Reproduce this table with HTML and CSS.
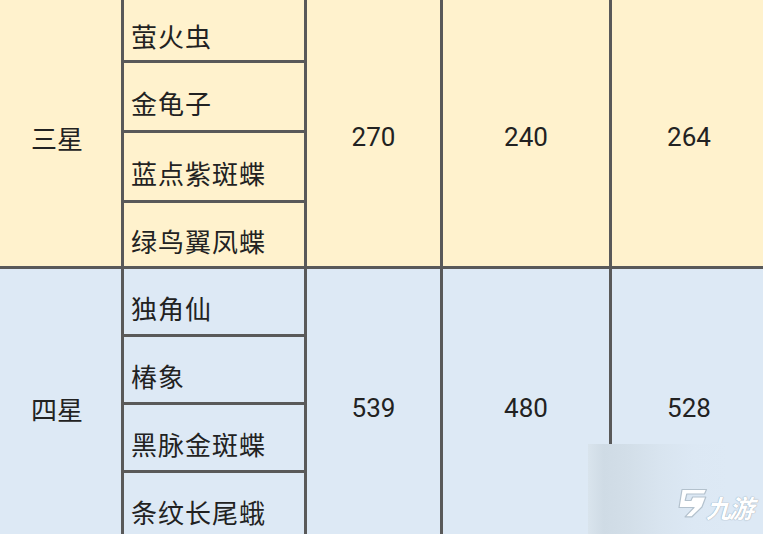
FILE: index.html
```html
<!DOCTYPE html>
<html lang="zh">
<head>
<meta charset="utf-8">
<link rel="stylesheet" href="styles.css">
</head>
<body>
<div class="page">
  <div class="grid">
    <div class="cell star yellow r-up">三星</div>
    <div class="cell name yellow h1">萤火虫</div>
    <div class="cell num yellow r-up">270</div>
    <div class="cell num yellow r-up">240</div>
    <div class="cell num yellow r-up">264</div>
    <div class="cell name yellow h2">金龟子</div>
    <div class="cell name yellow h3">蓝点紫斑蝶</div>
    <div class="cell name yellow h4">绿鸟翼凤蝶</div>

    <div class="cell star blue r-down">四星</div>
    <div class="cell name blue h5">独角仙</div>
    <div class="cell num blue r-down">539</div>
    <div class="cell num blue r-down">480</div>
    <div class="cell num blue r-down">528</div>
    <div class="cell name blue h6">椿象</div>
    <div class="cell name blue h7">黑脉金斑蝶</div>
    <div class="cell name blue h8">条纹长尾蛾</div>
  </div>

  <div class="watermark">
    <svg class="wm-logo" width="34" height="30" viewBox="0 0 34 30">
      <path d="M8 1.5 L32.5 1.5 L30.5 6 L12.8 6 L11.2 12.5 L17 12.5 L18.6 9 L31.8 9 L28 19 L18 28.8 L11 28.8 L20 19.5 L5 19.5 Z" fill="#ffffff" stroke="#b3c1cd" stroke-width="1.2" stroke-linejoin="round"/>
    </svg>
    <span class="wm-text">九游</span>
  </div>
</div>
</body>
</html>
```
FILE: styles.css
```css
html, body {
  margin: 0;
  padding: 0;
  width: 763px;
  height: 534px;
  overflow: hidden;
  background: #dde9f5;
}

.page {
  position: relative;
  width: 763px;
  height: 534px;
  overflow: hidden;
}

.grid {
  display: grid;
  grid-template-columns: 125px 180px 133px 166px 160px;
  grid-template-rows: 61px 67px 67px 63px 65px 65px 65px 65px;
  gap: 3px;
  padding: 3px;
  background: #595959;
  margin: -4px 0 0 -7px;
  width: max-content;
  font-family: Roboto, "Noto Sans CJK SC", sans-serif;
  color: #222222;
}

.cell {
  display: flex;
  align-items: center;
  box-sizing: border-box;
}

.yellow { background: #fff2cd; }
.blue { background: #dde9f5; }

.r-up { grid-row: 1 / span 4; }
.r-down { grid-row: 5 / span 4; }

.star {
  grid-column: 1;
  justify-content: center;
  font-family: "Noto Sans CJK SC", sans-serif;
  font-size: 26px;
  padding-top: 9px;
  padding-right: 3px;
}

.name {
  grid-column: 2;
  font-family: "Noto Sans CJK SC", sans-serif;
  font-size: 26px;
  letter-spacing: 1px;
  padding-left: 7px;
  padding-top: 11px;
}

.num {
  justify-content: center;
  font-size: 26px;
  padding-top: 9px;
}

.grid .num:nth-child(3), .grid .num:nth-child(11) { grid-column: 3; }
.grid .num:nth-child(4), .grid .num:nth-child(12) { grid-column: 4; }
.grid .num:nth-child(5), .grid .num:nth-child(13) { grid-column: 5; padding-right: 6px; }

.watermark {
  position: absolute;
  left: 588px;
  top: 444px;
  width: 175px;
  height: 90px;
  background: linear-gradient(to right, #d9e4ed 0%, #cfdbe5 9%, #d2dee8 22%, #d8e4ef 40%, #dce8f4 60%, #dde9f5 80%);
  display: flex;
  align-items: flex-end;
  padding: 0 0 16px 86px;
  box-sizing: border-box;
  gap: 1px;
}

.wm-logo {
  display: block;
  flex: none;
}

.wm-text {
  font-family: "Noto Sans CJK SC", sans-serif;
  font-size: 25px;
  font-weight: 700;
  color: #ffffff;
  line-height: 22px;
  transform: skewX(-16deg);
  text-shadow: 0 0 1px #98aab8, 0 0 1px #98aab8;
  letter-spacing: -2px;
  white-space: nowrap;
}
```
